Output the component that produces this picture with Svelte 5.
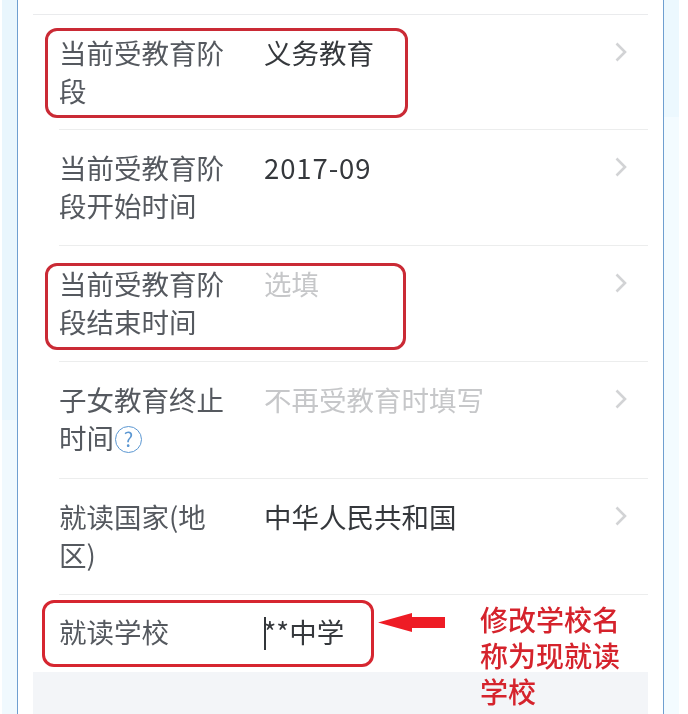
<script>
  const rows = [
    { label: "当前受教育阶段", value: "义务教育" },
    { label: "当前受教育阶段开始时间", value: "2017-09", digits: true },
    { label: "当前受教育阶段结束时间", placeholder: "选填" },
    { label: "子女教育终止时间", placeholder: "不再受教育时填写", help: true },
    { label: "就读国家(地区)", value: "中华人民共和国" }
  ];
</script>

<div class="page">
  <div class="backdrop">
    <div class="phone">
      <div class="list">
        {#each rows as row}
          <div class="row">
            <div class="label">{row.label}{#if row.help}<span class="help">?</span>{/if}</div>
            {#if row.value}
              <div class="value" class:digits={row.digits}>{row.value}</div>
            {:else}
              <div class="value placeholder">{row.placeholder}</div>
            {/if}
            <svg class="chevron" width="12" height="20" viewBox="0 0 12 20">
              <path d="M1.5 1.5 L10 10 L1.5 18.5" fill="none" stroke="#d2d3d5" stroke-width="2.6" />
            </svg>
          </div>
        {/each}
        <div class="row school">
          <div class="label">就读学校</div>
          <div class="value"><span class="caret"></span>**中学</div>
        </div>
        <div class="footer"></div>
      </div>
    </div>
  </div>

  <!-- annotations drawn on top of the screenshot -->
  <div class="mark mark-1"></div>
  <div class="mark mark-2"></div>
  <div class="mark mark-3"></div>
  <svg class="arrow" width="68" height="20" viewBox="0 0 68 20">
    <path d="M0 9.5 L34 0 L34 4 L67 4 L67 15 L34 15 L34 19 Z" fill="#ee1c25" />
  </svg>
  <div class="note">修改学校名称为现就读学校</div>
</div>

<style>
  :global(body) {
    margin: 0;
    background: #fff;
  }

  .page {
    position: relative;
    width: 688px;
    height: 714px;
    overflow: hidden;
    font-family: "Noto Sans CJK SC", "Noto Sans", sans-serif;
    filter: blur(0.3px);
  }

  .backdrop {
    width: 677px;
    height: 714px;
    margin-left: 2px;
    padding: 0 15px;
    box-sizing: border-box;
    background:
      linear-gradient(#e9f6fd 0, #e9f6fd 420px, #f0f9fe 420px) left / 15px 100% no-repeat,
      linear-gradient(#ecf8fe 0, #ecf8fe 117px, #f3fbff 117px) right / 15px 100% no-repeat;
  }

  .phone {
    width: 647px;
    height: 714px;
    box-sizing: border-box;
    padding: 14px 15px 0;
    background: #fff;
    border-left: 1px solid #6f9fd0;
    border-right: 1px solid #6f9fd0;
  }

  .list {
    border-top: 1px solid #eaebed;
  }

  .row {
    display: grid;
    grid-template-columns: 205px 1fr 34px;
    height: 116px;
    box-sizing: border-box;
    margin-left: 26px;
    padding-top: 18px;
    border-bottom: 1px solid #eceded;
    font-size: 27.5px;
    line-height: 38px;
  }

  .row:first-child {
    height: 115px;
  }

  .row:nth-child(4) {
    height: 117px;
  }

  .row:nth-child(5) {
    padding-top: 18px;
    height: 116px;
  }

  .label {
    width: 170px;
    color: #55595f;
  }

  .value {
    color: #35383c;
  }

  .digits {
    letter-spacing: 0.9px;
  }

  .placeholder {
    color: #c6c7c9;
  }

  .chevron {
    margin-top: 9px;
    margin-left: 1px;
  }

  .help {
    display: inline-block;
    box-sizing: border-box;
    width: 27px;
    height: 27px;
    margin-left: 1px;
    border: 1.5px solid #5b97d2;
    border-radius: 50%;
    color: #5b97d2;
    font-size: 20px;
    line-height: 24px;
    text-align: center;
    vertical-align: 2px;
  }

  .school {
    height: 77px;
    padding-top: 17px;
    border-bottom: 0;
  }

  .school .label {
    width: auto;
  }

  .caret {
    display: inline-block;
    width: 1.5px;
    height: 33px;
    margin-right: -2px;
    background: #33363a;
    vertical-align: -7px;
  }

  .footer {
    height: 60px;
    background: #f3f5f8;
  }

  .mark {
    position: absolute;
    box-sizing: border-box;
    border: 3px solid #ca2a35;
    border-radius: 12px;
  }

  .mark-1 {
    left: 45px;
    top: 28px;
    width: 363px;
    height: 90px;
  }

  .mark-2 {
    left: 45px;
    top: 263px;
    width: 361px;
    height: 87px;
  }

  .mark-3 {
    left: 42px;
    top: 600px;
    width: 332px;
    height: 67px;
    border-color: #d62630;
  }

  .arrow {
    position: absolute;
    left: 378px;
    top: 613px;
  }

  .note {
    position: absolute;
    left: 480px;
    top: 601px;
    width: 142px;
    color: #d5232c;
    font-size: 28px;
    line-height: 36px;
    font-weight: 500;
  }
</style>
